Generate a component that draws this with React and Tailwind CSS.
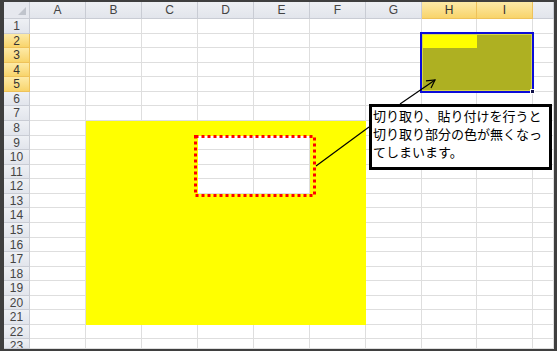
import React from 'react';

const COLS = ['A', 'B', 'C', 'D', 'E', 'F', 'G', 'H', 'I', ''];
const ROWS = Array.from({ length: 23 }, (_, i) => i + 1);

function cellFill(r, c) {
  if (r >= 2 && r <= 5 && c >= 7 && c <= 8) {
    return r === 2 && c === 7 ? 'bg-[#ffff00] border-[#ffff00]' : 'bg-[#aeb022] border-[#aeb022]';
  }
  const inYellow = r >= 8 && r <= 21 && c >= 1 && c <= 5;
  const inCut = r >= 9 && r <= 12 && c >= 3 && c <= 4;
  if (inYellow && !inCut) return 'bg-[#ffff00] border-[#ffff00]';
  return 'bg-white border-[#dedede]';
}

function headerClass(selected) {
  return selected
    ? 'bg-linear-to-b from-[#fdeaa6] to-[#f8d46a] border-[#eec25a] text-[#333]'
    : 'bg-linear-to-b from-[#eef0f4] to-[#e2e5ec] border-[#c9ccd4] text-[#444]';
}

function Corner() {
  return (
    <div className="relative border-r border-b border-[#c9ccd4] bg-[#e6e8ee]">
      <svg className="absolute right-[3px] bottom-[3px]" width="8" height="8" viewBox="0 0 8 8">
        <polygon points="8,0 8,8 0,8" fill="#c0c4cc" />
      </svg>
    </div>
  );
}

export default function App() {
  return (
    <div className="relative w-[557px] h-[351px] bg-[#3f3f3f] pt-[2px] pl-[4px] pr-[3px] pb-[2px] font-['Liberation_Sans',Arial,sans-serif]">
      <div className="grid h-full bg-white overflow-hidden grid-cols-[26px_repeat(7,56px)_55px_56px_21px] grid-rows-[17px_15px_14px_15px_14px_15px_14px_15px_15px_14px_15px_14px_15px_14px_15px_15px_14px_15px_14px_15px_14px_15px_14px_10px]">
        <Corner />
        {COLS.map((c, i) => (
          <div
            key={'h' + i}
            className={`flex items-center justify-center border-r border-b text-[12px] ${headerClass(i === 7 || i === 8)}`}
          >
            {c}
          </div>
        ))}
        {ROWS.map((r) => (
          <React.Fragment key={r}>
            <div
              className={`flex items-start justify-center pt-[1px] overflow-hidden border-r border-b text-[12px] leading-[12px] ${headerClass(r >= 2 && r <= 5)}`}
            >
              {r}
            </div>
            {COLS.map((_, c) => (
              <div key={c} className={`border-r border-b ${cellFill(r, c)}`} />
            ))}
          </React.Fragment>
        ))}
      </div>

      {/* selection around H2:I5 */}
      <div className="absolute left-[420px] top-[32px] w-[114px] h-[61px] border-2 border-[#0c0cd8]">
        <div className="w-full h-full border border-[#d6d64a]" />
      </div>
      <div className="absolute left-[530px] top-[89px] w-[5px] h-[5px] bg-[#10104a] border border-white" />

      {/* marquee and leader lines */}
      <svg className="absolute left-0 top-0 pointer-events-none" width="557" height="351" viewBox="0 0 557 351">
        <rect x="195.5" y="136.5" width="119" height="59" fill="none" stroke="#ff0000" strokeWidth="3" strokeDasharray="3 3" />
        <line x1="316" y1="166" x2="369" y2="127" stroke="#000" strokeWidth="1.2" />
        <line x1="400" y1="104" x2="435" y2="80" stroke="#000" strokeWidth="1.2" />
        <polyline points="426,80.8 435,80 431,88" fill="none" stroke="#000" strokeWidth="1.2" />
      </svg>

      <div className="absolute left-[369px] top-[104px] w-[183px] h-[66px] border-[3px] border-black bg-white pl-[1px] text-[13px] leading-[18px] text-black font-['Noto_Sans_CJK_JP',sans-serif] whitespace-nowrap">
        <div>切り取り、貼り付けを行うと</div>
        <div>切り取り部分の色が無くなっ</div>
        <div>てしまいます。</div>
      </div>
    </div>
  );
}
